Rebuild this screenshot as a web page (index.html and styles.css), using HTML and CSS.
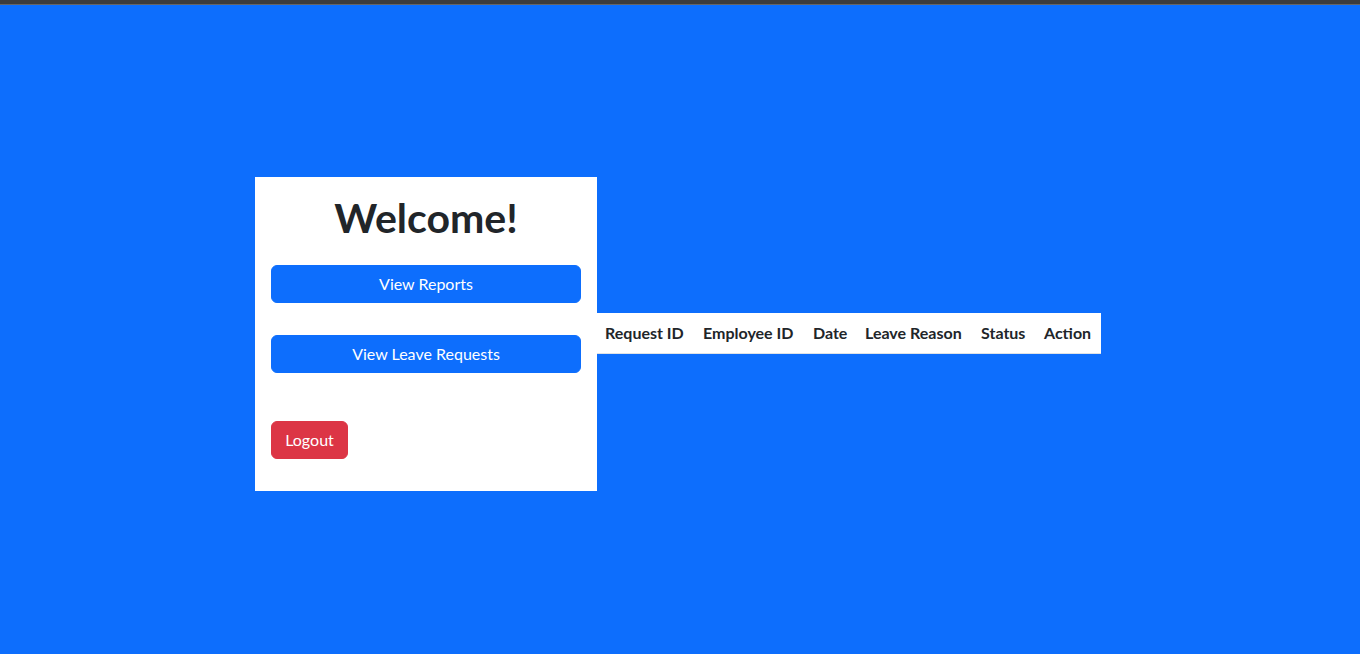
FILE: index.html
```html
<!DOCTYPE html>
<html lang="en">
<head>
<meta charset="utf-8">
<title>Dashboard</title>
<link rel="stylesheet" href="styles.css">
</head>
<body>
<div class="topbar"></div>
<main class="page">
  <section class="card">
    <h1 class="title">Welcome!</h1>
    <button class="btn btn-primary btn-block">View Reports</button>
    <button class="btn btn-primary btn-block">View Leave Requests</button>
    <button class="btn btn-danger btn-logout">Logout</button>
  </section>
  <table class="requests">
    <thead>
      <tr>
        <th class="c-id">Request ID</th>
        <th class="c-emp">Employee ID</th>
        <th class="c-date">Date</th>
        <th class="c-reason">Leave Reason</th>
        <th class="c-status">Status</th>
        <th class="c-action">Action</th>
      </tr>
    </thead>
    <tbody></tbody>
  </table>
</main>
</body>
</html>
```
FILE: styles.css
```css
* { box-sizing: border-box; }
html, body { margin: 0; padding: 0; }
body {
  background: #0d6efd;
  font-family: Lato, "Open Sans", sans-serif;
  font-size: 16px;
  line-height: 1.5;
  color: #212529;
  height: 654px;
  overflow: hidden;
}
.topbar {
  height: 5px;
  background: #3c3c3c;
  border-bottom: 1px solid #666;
}
.page {
  height: 649px;
  padding: 8px 4px 0 0;
  display: flex;
  justify-content: center;
  align-items: center;
}
.card {
  width: 342px;
  background: #fff;
  padding: 16px 16px 32px;
  display: flex;
  flex-direction: column;
  align-items: stretch;
}
.title {
  margin: 1px 0 23px;
  font-size: 41px;
  font-weight: 700;
  line-height: 48px;
  text-align: center;
}
.btn {
  font-family: inherit;
  font-size: 16px;
  line-height: 24px;
  padding: 6px 12px;
  border: 1px solid transparent;
  border-radius: 6px;
  color: #fff;
  cursor: pointer;
}
.btn-primary { background: #0d6efd; border-color: #0d6efd; }
.btn-danger { background: #dc3545; border-color: #dc3545; }
.btn-block { width: 100%; margin-bottom: 32px; }
.btn-block + .btn-logout { margin-top: 16px; }
.btn-logout { align-self: flex-start; min-width: 77px; }
.requests {
  background: #fff;
  border-collapse: collapse;
  table-layout: fixed;
  width: 504px;
}
.requests th {
  padding: 8px;
  font-weight: 700;
  text-align: left;
  white-space: nowrap;
  line-height: 24px;
  border-bottom: 1px solid #dee2e6;
}
.c-id { width: 98px; }
.c-emp { width: 110px; }
.c-date { width: 52px; }
.c-reason { width: 116px; }
.c-status { width: 63px; }
.c-action { width: 65px; }
```
